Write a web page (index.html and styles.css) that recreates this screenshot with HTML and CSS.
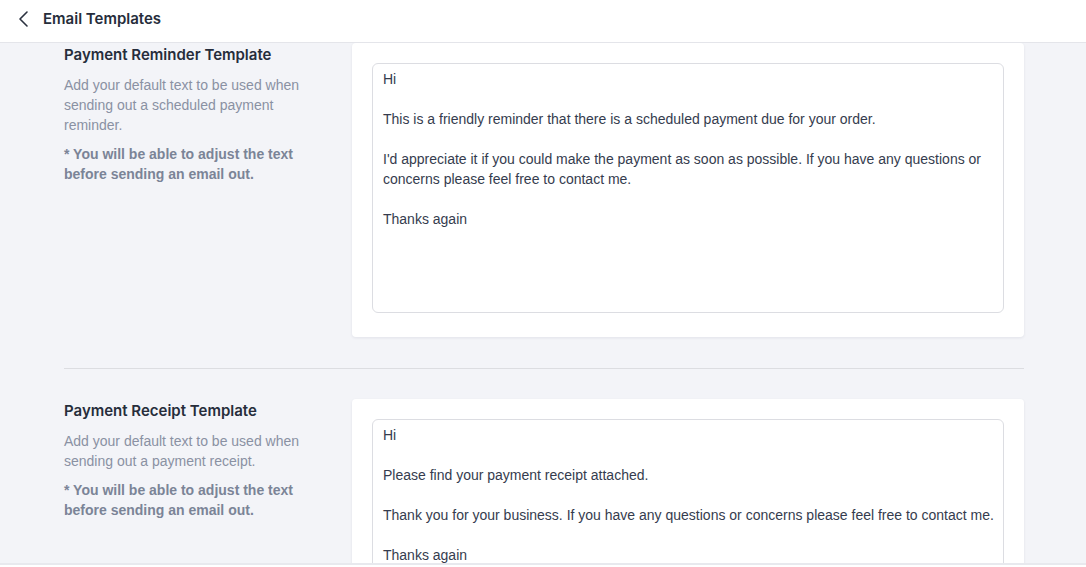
FILE: index.html
```html
<!DOCTYPE html>
<html lang="en">
<head>
<meta charset="utf-8">
<title>Email Templates</title>
<link rel="stylesheet" href="styles.css">
</head>
<body>
<header class="topbar">
  <button class="back" aria-label="Back">
    <svg width="14" height="18" viewBox="0 0 14 18"><polyline points="10,2 3,9 10,16" fill="none" stroke="#2b3240" stroke-width="1.6" stroke-linecap="round" stroke-linejoin="round"/></svg>
  </button>
  <h1 class="title">Email Templates</h1>
</header>
<main class="content">
  <section class="tpl">
    <div class="tpl-info">
      <h2 class="tpl-title">Payment Reminder Template</h2>
      <p class="tpl-desc">Add your default text to be used when sending out a scheduled payment reminder.</p>
      <p class="tpl-note">* You will be able to adjust the text before sending an email out.</p>
    </div>
    <div class="card">
      <textarea class="editor">Hi

This is a friendly reminder that there is a scheduled payment due for your order.

I'd appreciate it if you could make the payment as soon as possible. If you have any questions or concerns please feel free to contact me.

Thanks again</textarea>
    </div>
  </section>
  <hr class="divider">
  <section class="tpl">
    <div class="tpl-info">
      <h2 class="tpl-title">Payment Receipt Template</h2>
      <p class="tpl-desc">Add your default text to be used when sending out a payment receipt.</p>
      <p class="tpl-note">* You will be able to adjust the text before sending an email out.</p>
    </div>
    <div class="card">
      <textarea class="editor">Hi

Please find your payment receipt attached.

Thank you for your business. If you have any questions or concerns please feel free to contact me.

Thanks again</textarea>
    </div>
  </section>
</main>
<div class="bottom-edge"></div>
</body>
</html>
```
FILE: styles.css
```css
* { box-sizing: border-box; }
html, body { margin: 0; padding: 0; }
body {
  background: #f3f4f8;
  font-family: "Liberation Sans", Arial, sans-serif;
  font-size: 14px;
  color: #2b3240;
  height: 567px;
  overflow: hidden;
}
.topbar {
  height: 43px;
  background: #fff;
  border-bottom: 1px solid #e4e5ea;
  display: flex;
  align-items: center;
  padding-left: 14px;
  position: relative;
  z-index: 2;
}
.back {
  border: 0;
  background: none;
  padding: 0;
  width: 22px;
  height: 24px;
  display: flex;
  align-items: center;
  justify-content: flex-start;
  margin-right: 7px;
  margin-top: -4px;
  cursor: pointer;
}
.back svg { margin-left: 3px; }
.title {
  margin: 0;
  font-family: Inter, "Liberation Sans", sans-serif;
  font-size: 15px;
  font-weight: 600;
  color: #262d3b;
  margin-top: -5px;
}
.content {
  width: 960px;
  margin-left: 64px;
}
.tpl {
  display: grid;
  grid-template-columns: 256px 672px;
  column-gap: 32px;
  align-items: start;
}
.tpl-info { padding-top: 1px; }
.tpl-title {
  margin: 0;
  font-family: Inter, "Liberation Sans", sans-serif;
  font-size: 15px;
  line-height: 22px;
  font-weight: 600;
  color: #262d3b;
}
.tpl-desc {
  margin: 9px 0 0;
  line-height: 20px;
  color: #8a91a3;
}
.tpl-note {
  margin: 9px 0 0;
  line-height: 20px;
  font-weight: 700;
  color: #7b8497;
}
.card {
  background: #fff;
  border-radius: 4px;
  box-shadow: 0 1px 3px rgba(20, 30, 60, 0.08);
  padding: 20px 20px 24px;
}
.editor {
  display: block;
  width: 100%;
  height: 250px;
  resize: none;
  overflow: hidden;
  border: 1px solid #dcdde2;
  border-radius: 6px;
  padding: 5px 8px 6px 10px;
  font-family: "Liberation Sans", Arial, sans-serif;
  font-size: 14px;
  line-height: 20px;
  color: #353c4e;
  background: #fff;
}
.divider {
  border: 0;
  border-top: 1px solid #dcdde1;
  margin: 31px 0 30px;
}
.bottom-edge {
  position: fixed;
  left: 0;
  right: 0;
  bottom: 0;
  height: 4px;
  border-top: 2px solid #e8e9ee;
  background: #fff;
  z-index: 3;
}
```
